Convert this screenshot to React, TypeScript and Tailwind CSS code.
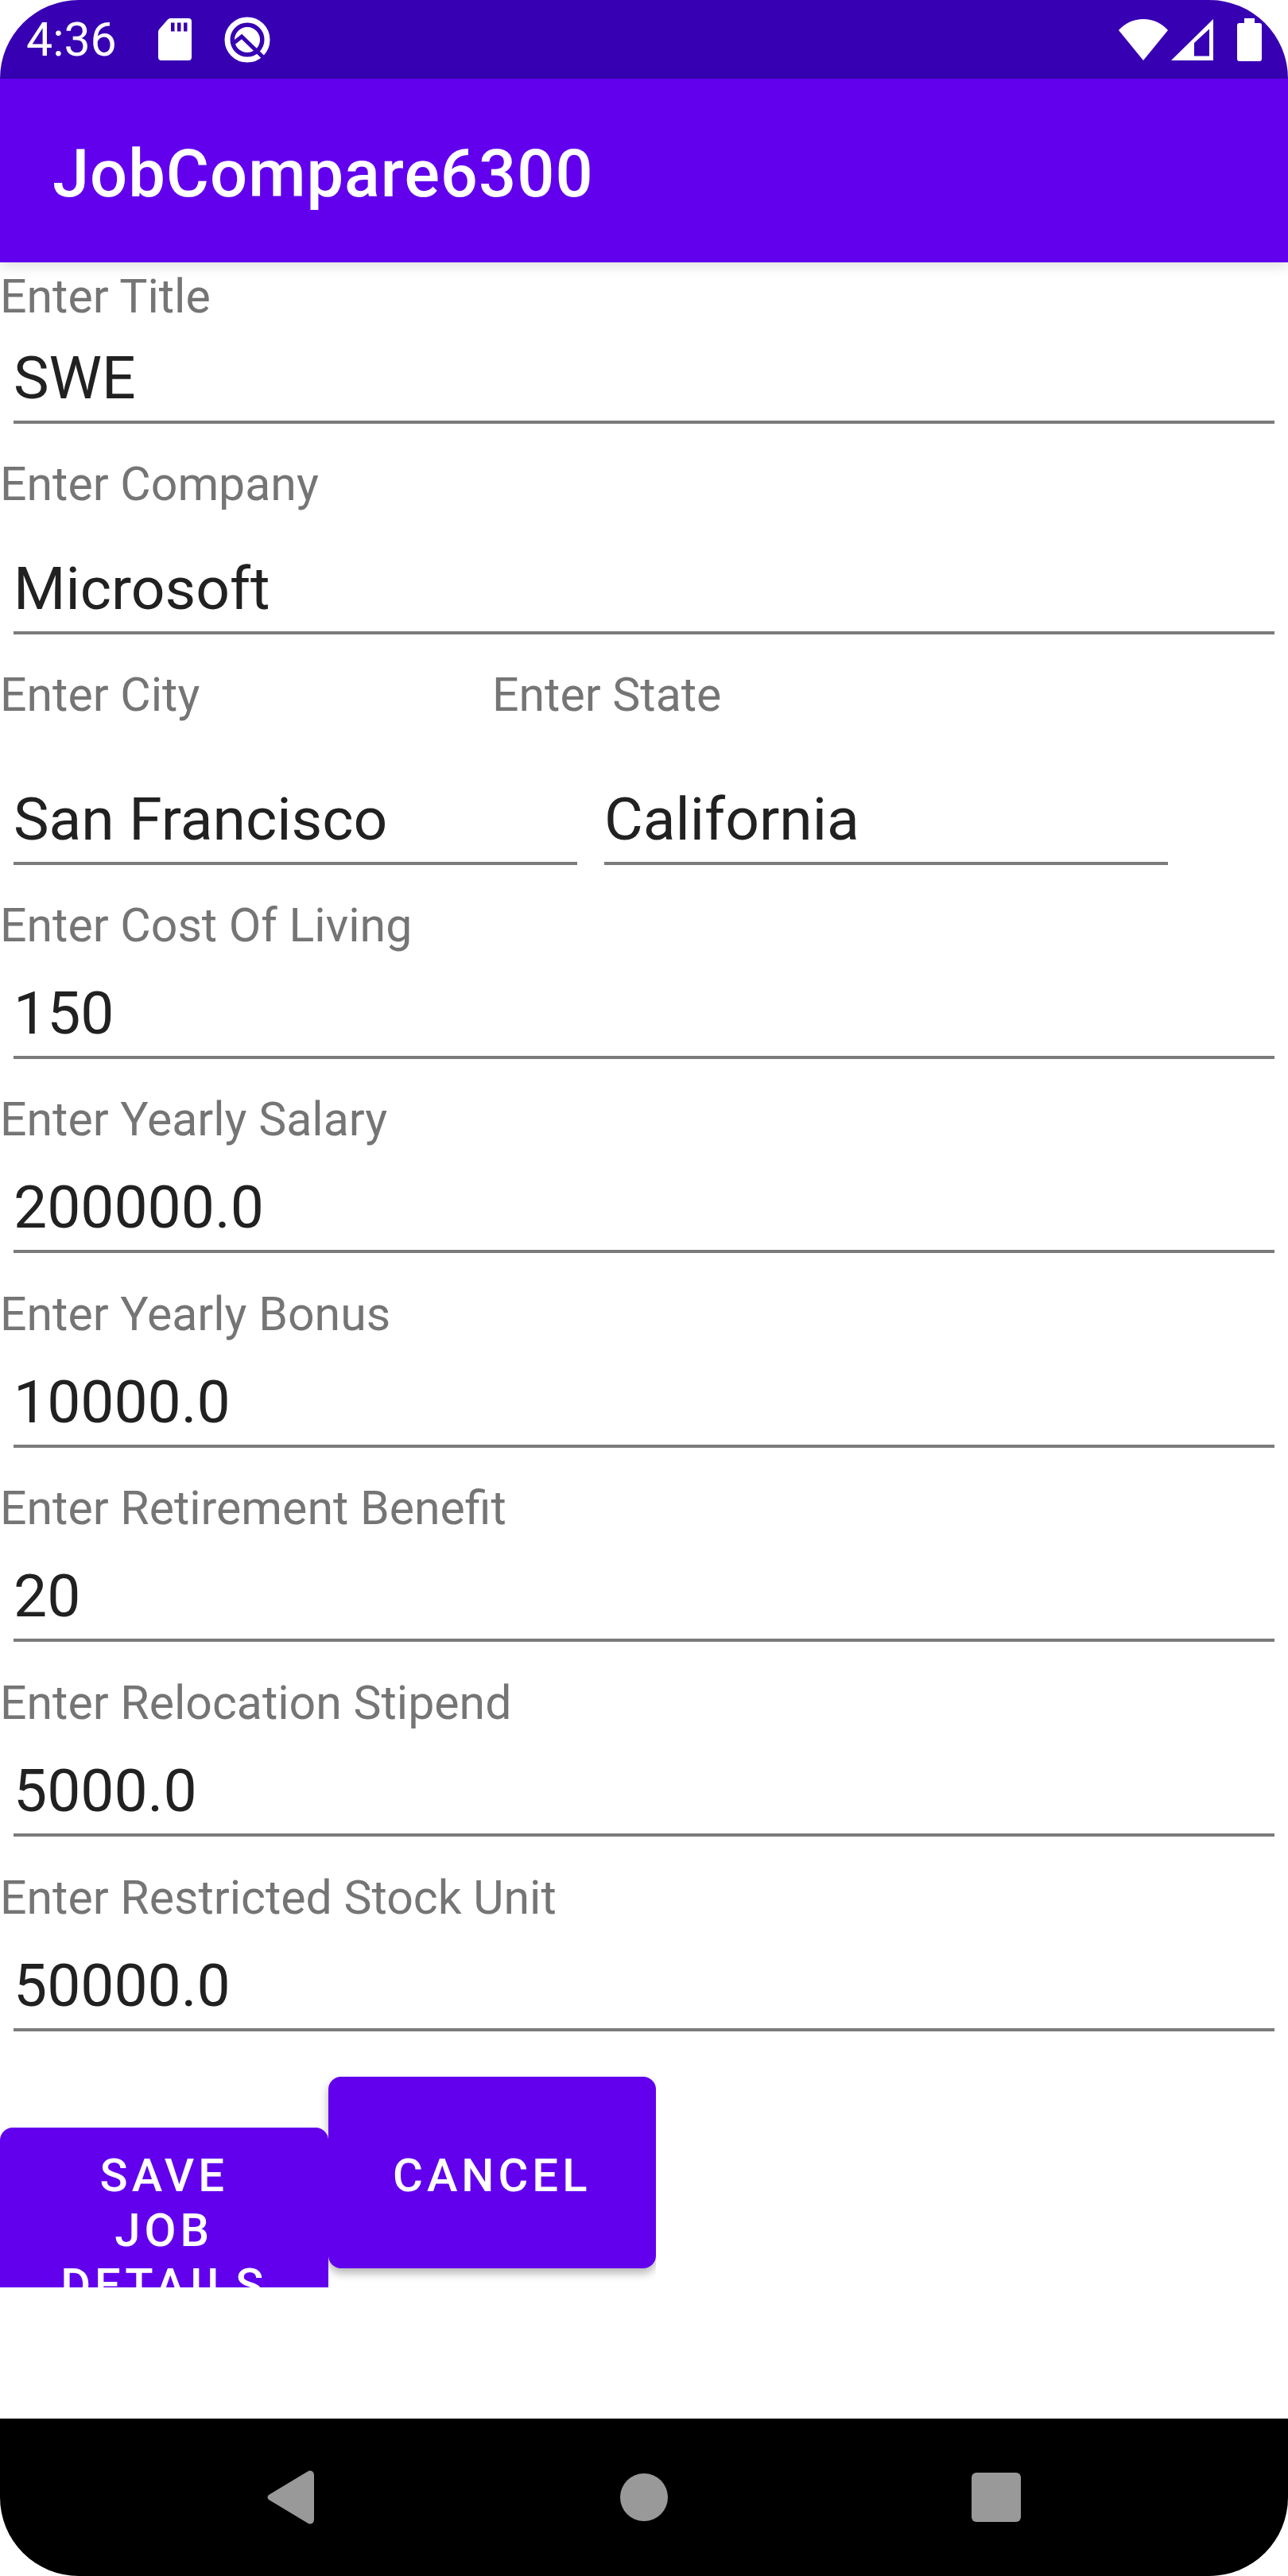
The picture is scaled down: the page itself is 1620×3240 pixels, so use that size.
import { useId } from "react";

type FieldProps = {
  label: string;
  value: string;
  top?: string;
  gap?: string;
};

function TextInput({ id, value }: { id: string; value: string }) {
  return (
    <div className="px-[17px]">
      <input
        id={id}
        type="text"
        defaultValue={value}
        className="block h-[102px] w-full border-b-4 border-[#7b7b7b] bg-transparent p-0 pb-[11px] text-[75px] leading-[87px] text-[#212121] outline-none"
      />
    </div>
  );
}

function Field({ label, value, top = "pt-[42px]", gap = "gap-8" }: FieldProps) {
  const id = useId();
  return (
    <div className={`flex flex-col ${top} ${gap}`}>
      <label htmlFor={id} className="text-[59px] leading-[68px] text-[#757575]">
        {label}
      </label>
      <TextInput id={id} value={value} />
    </div>
  );
}

function StatusBar() {
  return (
    <div className="flex h-[99px] items-center justify-between bg-[#3700b3] px-[33px] text-white">
      <div className="flex items-center">
        <span className="text-[59px] leading-[68px]">4:36</span>
        <svg className="ml-[52px] h-[53px] w-[42px]" viewBox="0 0 42 53" fill="currentColor" aria-hidden="true">
          <path
            fillRule="evenodd"
            d="M15 0H38a4 4 0 0 1 4 4V49a4 4 0 0 1-4 4H4a4 4 0 0 1-4-4V17q0-2 1.500-3.500L12 1.500Q13.500 0 15 0ZM16 5.500V16.500H20.500V5.500ZM24 5.500V16.500H28.500V5.500ZM32 5.500V16.500H36.500V5.500Z"
          />
        </svg>
        <svg className="ml-[41px] h-[58px] w-[58px]" viewBox="0 0 58 58" aria-hidden="true">
          <circle cx="29" cy="29" r="25" fill="none" stroke="currentColor" strokeWidth="7" />
          <circle cx="29" cy="29" r="16" fill="currentColor" />
          <path d="M12 33L22 25L50 52" fill="none" stroke="#3700b3" strokeWidth="5" />
        </svg>
      </div>
      <div className="flex items-center">
        <svg className="h-[52px] w-[62px]" viewBox="0 0 62 52" fill="currentColor" aria-hidden="true">
          <path d="M31 52L0 14Q13 0 31 0T62 14Z" />
        </svg>
        <svg className="ml-1 h-[52px] w-[53px]" viewBox="0 0 53 52" fill="currentColor" aria-hidden="true">
          <path fillRule="evenodd" d="M0 52L53 0V52ZM29 30V46.500H48V12.500Z" />
        </svg>
        <svg className="ml-[30px] h-[54px] w-[31px]" viewBox="0 0 31 54" fill="currentColor" aria-hidden="true">
          <path d="M9 0H22V6H28a3 3 0 0 1 3 3V51a3 3 0 0 1-3 3H3a3 3 0 0 1-3-3V9a3 3 0 0 1 3-3H9Z" />
        </svg>
      </div>
    </div>
  );
}

function LocationFields() {
  const cityId = useId();
  const stateId = useId();
  return (
    <div className="flex flex-col gap-[78px] pt-[42px]">
      <div className="flex text-[59px] leading-[68px] text-[#757575]">
        <label htmlFor={cityId} className="w-[619px]">
          Enter City
        </label>
        <label htmlFor={stateId}>Enter State</label>
      </div>
      <div className="flex">
        <div className="w-[743px]">
          <TextInput id={cityId} value="San Francisco" />
        </div>
        <div className="w-[743px]">
          <TextInput id={stateId} value="California" />
        </div>
      </div>
    </div>
  );
}

function NavigationBar() {
  return (
    <nav className="flex h-[198px] items-center justify-center gap-[382px] bg-black text-[#999999]">
      <button type="button" aria-label="Back">
        <svg className="h-[68px] w-[62px]" viewBox="0 0 62 68" fill="currentColor" aria-hidden="true">
          <path d="M2 31L51 1.500Q54 -.5 57 1.500Q59 3 59 6V62Q59 65 57 66.500Q54 68.500 51 66.500L2 37Q-1 34 2 31Z" />
        </svg>
      </button>
      <button type="button" aria-label="Home">
        <span className="block size-[60px] rounded-full bg-[#999999]" />
      </button>
      <button type="button" aria-label="Recent apps">
        <span className="block size-[62px] rounded-md bg-[#999999]" />
      </button>
    </nav>
  );
}

export default function App() {
  return (
    <div className="flex min-h-screen flex-col overflow-hidden rounded-[99px] bg-white font-[Roboto,sans-serif]">
      <StatusBar />
      <header className="flex h-[231px] items-center bg-[#6200ee] px-[66px] pt-2 shadow-[0_4px_16px_rgba(0,0,0,0.14)]">
        <h1 className="text-[83px] leading-[96px] font-medium tracking-[1px] text-white">JobCompare6300</h1>
      </header>
      <form className="flex flex-1 flex-col" onSubmit={(event) => event.preventDefault()}>
        <Field label="Enter Title" value="SWE" top="pt-[9px]" gap="gap-6" />
        <Field label="Enter Company" value="Microsoft" gap="gap-[53px]" />
        <LocationFields />
        <Field label="Enter Cost Of Living" value="150" />
        <Field label="Enter Yearly Salary" value="200000.0" />
        <Field label="Enter Yearly Bonus" value="10000.0" top="pt-[43px]" />
        <Field label="Enter Retirement Benefit" value="20" />
        <Field label="Enter Relocation Stipend" value="5000.0" top="pt-[43px]" />
        <Field label="Enter Restricted Stock Unit" value="50000.0" top="pt-[43px]" />
        <div className="mt-[57px] flex h-[265px] w-[825px] items-baseline overflow-hidden text-[58px] leading-[69px] font-medium tracking-[5px] text-white">
          <button type="submit" className="relative z-10 w-1/2 rounded-2xl bg-[#6200ee] px-[66px] pt-[26px] pb-4">
            SAVE JOB DETAILS
          </button>
          <button
            type="button"
            className="w-1/2 rounded-2xl bg-[#6200ee] pt-[90px] pb-[82px] shadow-[0_6px_12px_rgba(0,0,0,0.3)]"
          >
            CANCEL
          </button>
        </div>
      </form>
      <NavigationBar />
    </div>
  );
}
